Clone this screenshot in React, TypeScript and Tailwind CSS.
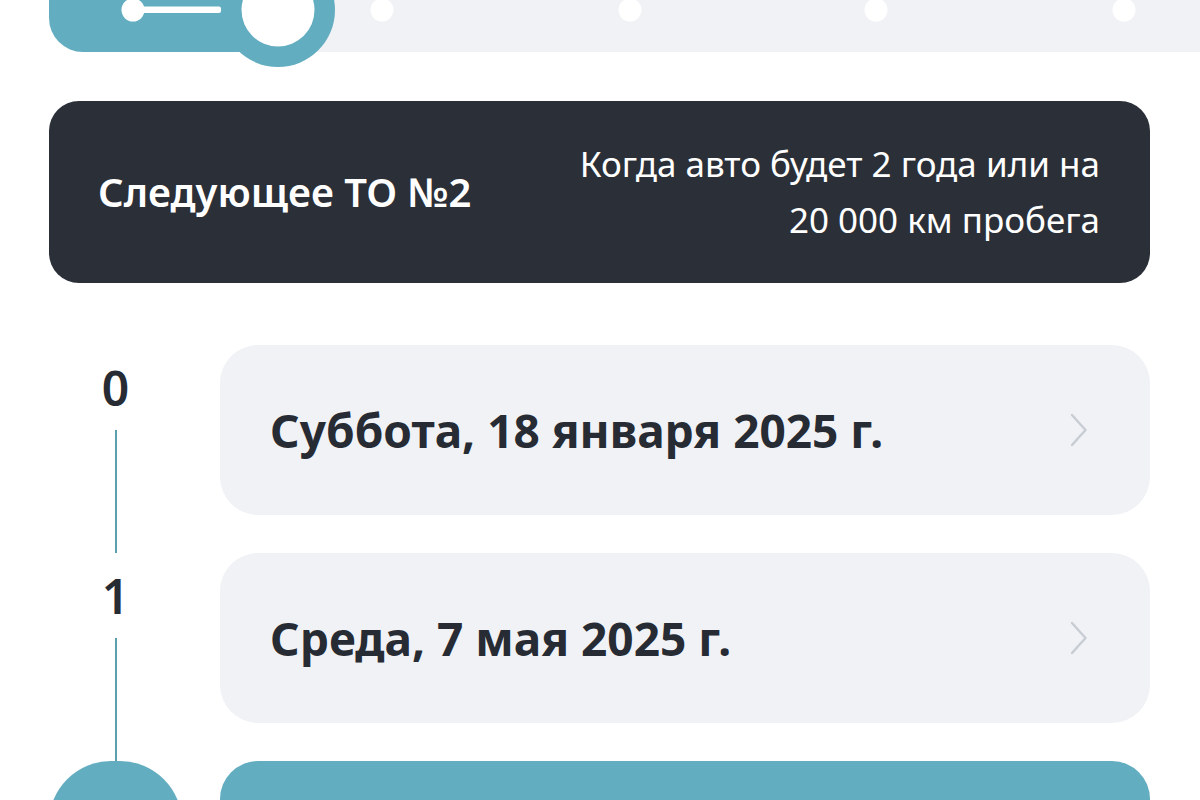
import React from 'react';

const teal = '#63adc1';

interface ServiceEntry {
  index: number;
  date: string;
}

const entries: ServiceEntry[] = [
  { index: 0, date: 'Суббота, 18 января 2025 г.' },
  { index: 1, date: 'Среда, 7 мая 2025 г.' },
];

// progress slider: filled part, knob and the step dots on the track
const ProgressSlider: React.FC = () => (
  <div className="relative h-[52px] w-full">
    <svg
      width="1200"
      height="70"
      viewBox="0 0 1200 70"
      className="absolute left-0 top-0 overflow-visible"
    >
      <rect x="250" y="-60" width="1000" height="112" fill="#f1f2f6" />
      {[382, 630, 876, 1124].map((cx) => (
        <circle key={cx} cx={cx} cy="10" r="11.5" fill="#ffffff" />
      ))}
      <path d="M49 -60 H280 V52 H83 A34 34 0 0 1 49 18 Z" fill={teal} />
      <circle cx="278" cy="10" r="57" fill={teal} />
      <circle cx="278" cy="10" r="36.5" fill="#ffffff" />
      <rect x="135" y="6.5" width="86" height="6.5" rx="2" fill="#ffffff" />
      <circle cx="133" cy="10" r="11.5" fill="#ffffff" />
    </svg>
  </div>
);

const Chevron: React.FC = () => (
  <svg width="18" height="34" viewBox="0 0 18 34" fill="none">
    <polyline
      points="2,2 15.5,17 2,32"
      stroke="#c8ccd3"
      strokeWidth="2.4"
      strokeLinecap="round"
      strokeLinejoin="round"
    />
  </svg>
);

const App: React.FC = () => {
  return (
    <div className="w-[1200px] h-[800px] overflow-hidden bg-white font-['Noto_Sans',sans-serif] text-[#272b33]">
      <ProgressSlider />

      <div className="mt-[49px] ml-[49px] mr-[50px] h-[182px] rounded-[30px] bg-[#2a2f38] flex items-center justify-between pl-[49px] pr-[50px]">
        <div className="text-[40px] font-semibold text-white leading-none">
          Следующее ТО №2
        </div>
        <div className="text-[35px] leading-[56px] text-right text-white">
          Когда авто будет 2 года или на
          <br />
          20 000 км пробега
        </div>
      </div>

      <div className="mt-[62px] pl-[49px] pr-[50px] flex flex-col">
        {entries.map((entry) => (
          <div key={entry.index} className="flex gap-[38px] h-[208px]">
            <div className="w-[133px] shrink-0 flex flex-col items-center">
              <div className="h-[85px] flex items-center text-[48px] font-semibold leading-none">
                {entry.index}
              </div>
              <div className="flex-1 w-[2px] bg-[#5b9fae]" />
            </div>
            <div className="flex-1 h-[170px] rounded-[38px] bg-[#f0f2f6] flex items-center justify-between pl-[50px] pr-[62px]">
              <span className="text-[46px] font-bold leading-none">
                {entry.date}
              </span>
              <Chevron />
            </div>
          </div>
        ))}

        <div className="flex gap-[38px]">
          <div className="w-[133px] shrink-0 h-[180px] rounded-t-[62px] bg-[#63adc1]" />
          <div className="flex-1 h-[180px] rounded-[38px] bg-[#63adc1]" />
        </div>
      </div>
    </div>
  );
};

export default App;
